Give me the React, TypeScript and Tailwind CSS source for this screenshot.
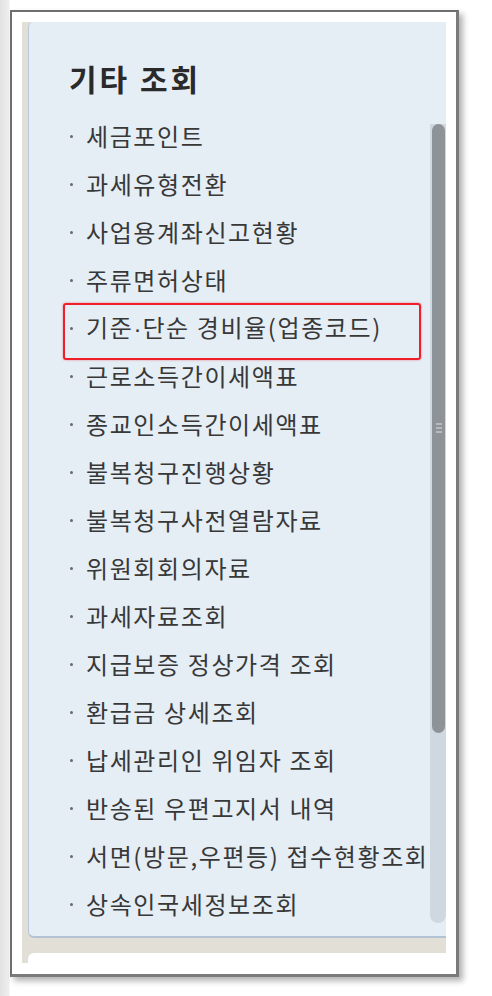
import React from "react";

const items = [
  "세금포인트",
  "과세유형전환",
  "사업용계좌신고현황",
  "주류면허상태",
  "기준·단순 경비율(업종코드)",
  "근로소득간이세액표",
  "종교인소득간이세액표",
  "불복청구진행상황",
  "불복청구사전열람자료",
  "위원회회의자료",
  "과세자료조회",
  "지급보증 정상가격 조회",
  "환급금 상세조회",
  "납세관리인 위임자 조회",
  "반송된 우편고지서 내역",
  "서면(방문,우편등) 접수현황조회",
  "상속인국세정보조회",
];

function Label({ t }: { t: string }) {
  if (!t.includes("·")) return <>{t}</>;
  const [a, b] = t.split("·");
  return (
    <>
      {a}
      <span className="tracking-[1px]" style={{ fontFamily: '"Liberation Sans", sans-serif' }}>
        ·
      </span>
      {b}
    </>
  );
}

export default function App() {
  return (
    <div
      className="w-[492px] h-[996px] overflow-hidden bg-[linear-gradient(to_right,#e2e2e2_0px,#efefef_9px,#ffffff_10px)] pt-[10px] pl-[10px]"
      style={{ fontFamily: '"Noto Sans CJK KR", "Noto Sans", sans-serif' }}
    >
      <div className="w-[449px] h-[967px] bg-white border-t-2 border-l-2 border-r-[3px] border-b-[3px] border-t-[#6e6e6e] border-l-[#6e6e6e] border-r-[#7a7a7a] border-b-[#7a7a7a] shadow-[4px_4px_6px_rgba(0,0,0,0.3)] pt-[10px] pl-[10px] pr-[10px]">
        <div className="h-[941px] bg-[#e2dfd7] pl-[6px] flex flex-col">
          <div className="relative h-[916px] bg-[#e5edf5] rounded-tl-[5px] rounded-bl-[6px] border-l border-b-2 border-l-[#b7c8dc] border-b-[#b3c3d6] flex">
            <div className="flex-1 pl-[40px] pt-[38px]">
              <div className="h-[36px] flex items-center text-[30px] font-bold text-[#2a2a2a] leading-none tracking-[3px]">
                기타 조회
              </div>
              <div className="mt-[16px] flex flex-col">
                {items.map((t, i) => (
                  <div key={i} className="relative h-[48px] flex items-center">
                    {i === 4 && (
                      <div className="absolute left-[-6px] top-[-1px] w-[358px] h-[57px] border-2 border-[#ef1f2a] rounded-[3px] shadow-[0_0_2px_rgba(239,31,42,0.6)]" />
                    )}
                    <div className="w-[17px] flex items-center">
                      <div className="w-[3px] h-[3px] ml-[1px] bg-[#6a6a6a] rounded-full" />
                    </div>
                    <span className="text-[24px] leading-none text-[#383838] whitespace-nowrap tracking-[1.6px]">
                      <Label t={t} />
                    </span>
                  </div>
                ))}
              </div>
            </div>
            <div className="w-[16px] pt-[102px] pb-[13px] flex flex-col">
              <div className="flex-1 bg-[#cfd7e0] rounded-b-[8px] pl-[2px] pr-[1px] flex flex-col">
                <div className="h-[609px] bg-[#8e9398] rounded-[7px] flex flex-col items-center pt-[299px] gap-[2px]">
                  <div className="w-[6px] h-[2px] bg-[#b7bbbf]" />
                  <div className="w-[6px] h-[2px] bg-[#b7bbbf]" />
                  <div className="w-[6px] h-[2px] bg-[#b7bbbf]" />
                </div>
              </div>
            </div>
          </div>
          <div className="mt-[15px] h-[10px] bg-white rounded-tl-[6px]" />
        </div>
      </div>
    </div>
  );
}
